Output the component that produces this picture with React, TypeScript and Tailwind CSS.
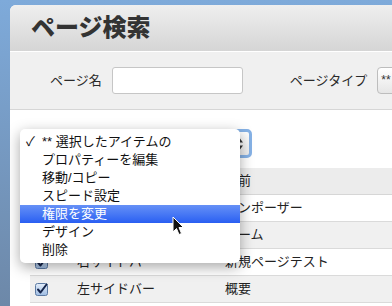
import React from "react";

const font = { fontFamily: '"Liberation Sans", "Noto Sans CJK JP", sans-serif' };

const rows = [
  { page: "ヘッダー", name: "コンポーザー", checked: true },
  { page: "フッター", name: "ホーム", checked: true },
  { page: "右サイドバー", name: "新規ページテスト", checked: true },
  { page: "左サイドバー", name: "概要", checked: true },
];

const menuItems = [
  "** 選択したアイテムの",
  "プロパティーを編集",
  "移動/コピー",
  "スピード設定",
  "権限を変更",
  "デザイン",
  "削除",
];

function Checkbox() {
  return (
    <svg width="13" height="13" viewBox="0 0 13 13">
      <defs>
        <linearGradient id="cb" x1="0" y1="0" x2="0" y2="1">
          <stop offset="0" stopColor="#e4eefa" />
          <stop offset="1" stopColor="#9dbbe2" />
        </linearGradient>
      </defs>
      <rect x="0.5" y="0.5" width="12" height="12" rx="2" fill="url(#cb)" stroke="#5c7aa3" />
      <path d="M3 6.5 L5.5 9.5 L11.5 1.5" fill="none" stroke="#14244a" strokeWidth="2" strokeLinecap="round" strokeLinejoin="round" />
    </svg>
  );
}

function Cursor() {
  return (
    <svg width="13" height="20" viewBox="0 0 13 20">
      <path d="M1 1 L1 16 L4.5 12.5 L7 18.5 L9.5 17.5 L7 11.5 L11.5 11.5 Z" fill="#111" stroke="#fff" strokeWidth="1" strokeLinejoin="round" />
    </svg>
  );
}

export default function App() {
  return (
    <div className="w-[392px] h-[306px] overflow-hidden bg-gradient-to-b from-[#7eaada] to-[#6d88a8] pt-[5px] pl-[10px]" style={font}>
      <div className="h-full bg-white rounded-tl-[6px] overflow-hidden flex flex-col">
        <div className="h-[47px] shrink-0 flex items-center pl-[21px] bg-gradient-to-b from-[#efefef] to-[#d5d5d5] border-b border-white">
          <h1 className="text-[24px] leading-[24px] font-black text-[#333] whitespace-nowrap">ページ検索</h1>
        </div>
        <div className="h-[58px] shrink-0 flex items-center bg-[#f0f0f0] border-b border-[#d6d6d6] pl-[40px] text-[13px] text-[#2a2a2a] whitespace-nowrap">
          <span className="shrink-0">ページ名</span>
          <div className="shrink-0 ml-[10px] w-[131px] h-[27px] bg-white border border-[#c6c6c6] rounded-[3px]" />
          <span className="shrink-0 ml-[47px]">ページタイプ</span>
          <div className="ml-[10px] w-[80px] h-[27px] shrink-0 rounded-[4px] border border-[#bdbdbd] bg-gradient-to-b from-white to-[#e6e6e6] pl-[3px] text-[12px] leading-[25px] text-[#333]">**</div>
        </div>
        <div className="relative flex-1 pt-[19px]">
          <div className="ml-[20px] w-[222px] h-[29px] rounded-[5px] border-[3px] border-[#86b2e6] bg-gradient-to-b from-white to-[#ececec] flex items-center justify-end pr-[6px]">
            <svg width="6" height="12" viewBox="0 0 6 12">
              <path d="M0 4.5 L3 0.5 L6 4.5 Z M0 7.5 L3 11.5 L6 7.5 Z" fill="#333" />
            </svg>
          </div>
          <div className="ml-[20px] mt-[10px] text-[13px] text-[#222] whitespace-nowrap">
            <div className="h-[27px] flex items-center bg-[#ececec] border-b border-[#d6d6d6]">
              <div className="w-[47px] shrink-0" />
              <div className="w-[148px] shrink-0">ページ名</div>
              <div>名前</div>
            </div>
            {rows.map((r, i) => (
              <div key={r.name} className={`h-[27px] flex items-center border-b border-[#dadada] ${i % 2 === 0 ? "bg-white" : "bg-[#f0f0f0]"}`}>
                <div className="w-[47px] shrink-0 pl-[5px] flex items-center">{r.checked && <Checkbox />}</div>
                <div className="w-[148px] shrink-0">{r.page}</div>
                <div>{r.name}</div>
              </div>
            ))}
          </div>

          <div className="absolute left-[10px] top-[19px] w-[220px] py-[4px] bg-white rounded-[5px] shadow-[0_4px_14px_rgba(0,0,0,0.35)] text-[13px] text-[#111] whitespace-nowrap">
            {menuItems.map((item, i) => (
              <div
                key={item}
                className={`h-[18px] leading-[18px] flex items-center ${i === 4 ? "bg-gradient-to-b from-[#6690f6] to-[#2a5ef2] text-white" : ""}`}
              >
                <span className="w-[22px] pl-[6px] shrink-0">{i === 0 ? "✓" : ""}</span>
                <span>{item}</span>
              </div>
            ))}
          </div>

          <div className="absolute left-[162px] top-[106px]">
            <Cursor />
          </div>
        </div>
      </div>
    </div>
  );
}
